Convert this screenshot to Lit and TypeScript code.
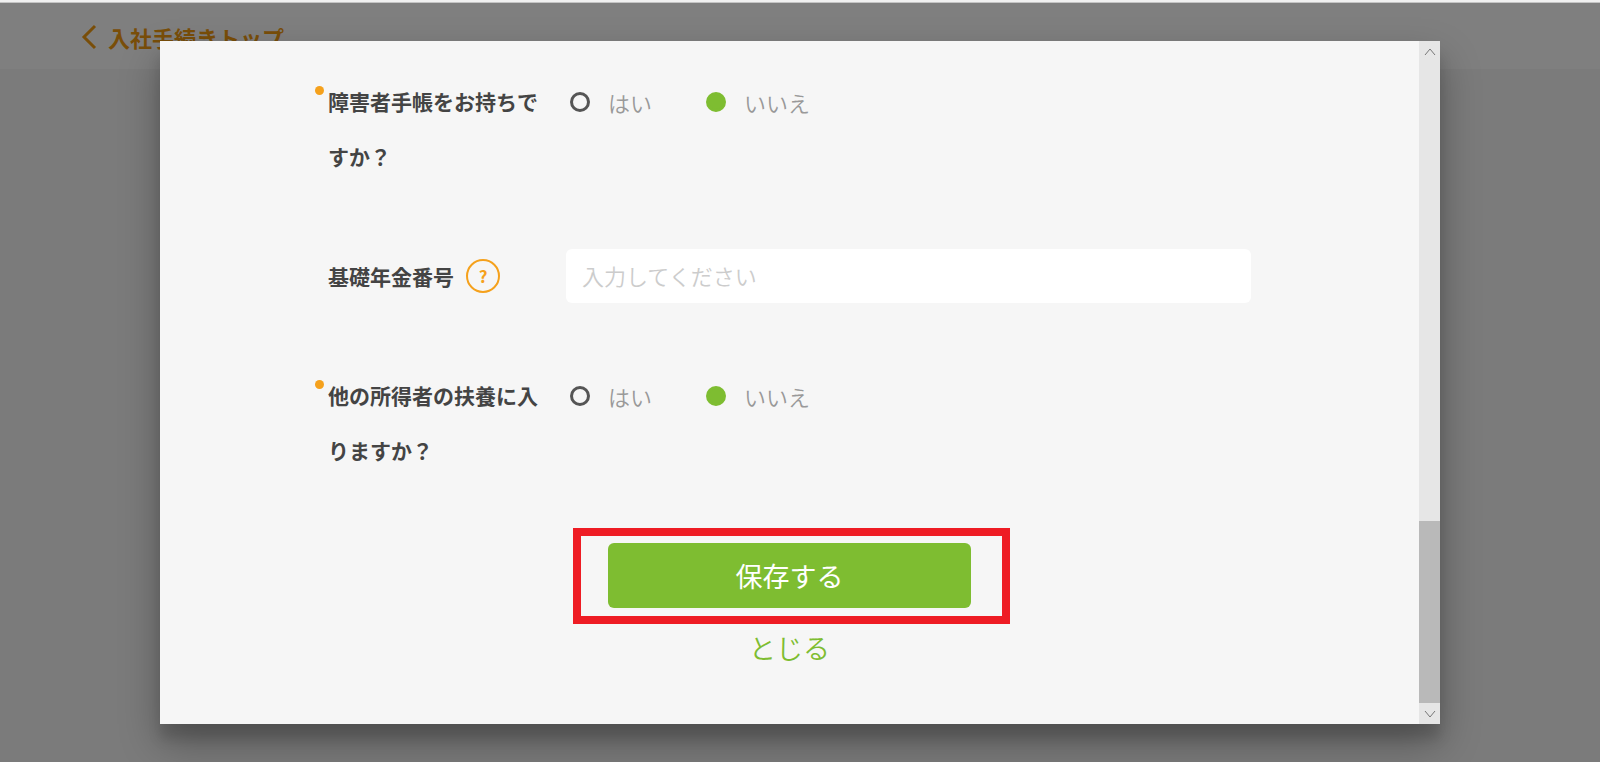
import { LitElement, html, css } from "lit";
import { customElement, property, state } from "lit/decorators.js";

@customElement("yes-no-field")
class YesNoField extends LitElement {
  @property() label = "";
  @property() name = "";
  @state() private value = "no";

  static styles = css`
    :host {
      display: block;
    }
    .row {
      display: grid;
      grid-template-columns: 210px 1fr;
      column-gap: 32px;
      border: 0;
      margin: 0;
      padding: 0;
    }
    .label {
      position: relative;
      font-size: 21px;
      font-weight: 700;
      line-height: 55px;
      color: #444;
    }
    .label::before {
      content: "";
      position: absolute;
      left: -13px;
      top: 12px;
      width: 9px;
      height: 9px;
      border-radius: 50%;
      background: #f5a11c;
    }
    .options {
      display: flex;
      align-items: center;
      gap: 54px;
      height: 55px;
    }
    .option {
      display: flex;
      align-items: center;
      gap: 18px;
      font-size: 22px;
      font-weight: 350;
      line-height: 32px;
      color: #999;
    }
    .radio {
      appearance: none;
      width: 20px;
      height: 20px;
      margin: 0;
      border: 3px solid #555;
      border-radius: 50%;
    }
    .radio:checked {
      border-color: #7ebd31;
      background: #7ebd31;
    }
  `;

  private option(value: string, text: string) {
    return html`<label class="option">
      <input
        class="radio"
        type="radio"
        name=${this.name}
        .checked=${this.value === value}
        @change=${() => (this.value = value)}
      />${text}
    </label>`;
  }

  render() {
    return html`<div class="row" role="radiogroup" aria-labelledby="label">
      <div class="label" id="label">${this.label}</div>
      <div class="options">
        ${this.option("yes", "はい")}${this.option("no", "いいえ")}
      </div>
    </div>`;
  }
}

@customElement("app-root")
class AppRoot extends LitElement {
  static styles = css`
    :host {
      display: block;
      position: relative;
      min-height: 100vh;
      overflow: hidden;
      background: #f6f6f6;
      font-family: "Noto Sans CJK JP", sans-serif;
    }
    .strip {
      height: 3px;
      box-sizing: border-box;
      background: #f0f0f0;
      border-bottom: 1px solid #c4c4c4;
    }
    .header {
      display: flex;
      align-items: center;
      box-sizing: border-box;
      height: 66px;
      padding: 2px 80px 0;
      background: #fff;
    }
    .back {
      display: flex;
      align-items: center;
      gap: 10px;
      color: #f39c12;
      font-size: 22px;
      font-weight: 700;
      line-height: 30px;
      text-decoration: none;
    }
    .overlay {
      position: absolute;
      inset: 3px 0 0;
      padding: 38px 10%;
      background: rgba(0, 0, 0, 0.5);
    }
    .dialog {
      display: flex;
      background: #f6f6f6;
      box-shadow:
        0 19px 38px rgba(0, 0, 0, 0.3),
        0 15px 12px rgba(0, 0, 0, 0.12);
    }
    .form {
      flex: 1;
      padding: 33px 168px 56px;
    }
    .fields {
      display: flex;
      flex-direction: column;
      gap: 65px;
    }
    .row {
      display: grid;
      grid-template-columns: 206px 1fr;
      column-gap: 32px;
    }
    .caption {
      display: flex;
      align-items: center;
      gap: 12px;
      font-size: 21px;
      font-weight: 700;
      color: #444;
    }
    .help {
      width: 34px;
      height: 34px;
      padding: 0;
      border: 2px solid #f5a11c;
      border-radius: 50%;
      background: none;
      color: #f5a11c;
      font: 700 17px/26px "Noto Sans CJK JP", sans-serif;
    }
    .text {
      box-sizing: border-box;
      width: 100%;
      height: 54px;
      padding: 0 16px 2px;
      border: 0;
      border-radius: 6px;
      background: #fff;
      color: #444;
      font: 350 22px/32px "Noto Sans CJK JP", sans-serif;
    }
    .text::placeholder {
      color: #ccc;
      opacity: 1;
    }
    .actions {
      display: flex;
      flex-direction: column;
      align-items: center;
      gap: 20px;
      margin-top: 65px;
    }
    .marked {
      position: relative;
      width: 363px;
    }
    .marked::after {
      content: "";
      position: absolute;
      inset: -15px -39px -16px -35px;
      border: 8px solid #ee1c24;
      pointer-events: none;
    }
    .save,
    .close {
      display: block;
      border: 0;
      padding: 0;
      font: 400 27px/40px "Noto Sans CJK JP", sans-serif;
    }
    .save {
      width: 100%;
      height: 65px;
      border-radius: 6px;
      background: #7ebd31;
      color: #fff;
    }
    .close {
      background: none;
      color: #7ebd31;
      font-weight: 350;
    }
    .scrollbar {
      display: flex;
      flex-direction: column;
      width: 21px;
      background: #e6e6e6;
    }
    .step {
      display: flex;
      align-items: center;
      justify-content: center;
      height: 21px;
      padding: 0;
      border: 0;
      background: none;
    }
    .track {
      display: flex;
      flex: 1;
      flex-direction: column;
      justify-content: flex-end;
    }
    .thumb {
      height: 28.4%;
      background: #b9b9b9;
    }
  `;

  render() {
    return html`
      <div class="strip"></div>
      <header class="header">
        <a class="back" href="#">
          <svg width="18" height="26" viewBox="0 0 18 26" fill="none" stroke="currentColor" stroke-width="3">
            <path d="M15 2 4 13 15 24" />
          </svg>
          入社手続きトップ
        </a>
      </header>
      <div class="overlay">
        <div class="dialog" role="dialog" aria-modal="true">
          <form class="form" @submit=${(e: Event) => e.preventDefault()}>
            <div class="fields">
              <yes-no-field name="disability" label="障害者手帳をお持ちですか？"></yes-no-field>
              <div class="row">
                <div class="caption">
                  <label for="pension">基礎年金番号</label>
                  <button class="help" type="button">?</button>
                </div>
                <input class="text" id="pension" type="text" placeholder="入力してください" />
              </div>
              <yes-no-field name="dependent" label="他の所得者の扶養に入りますか？"></yes-no-field>
            </div>
            <div class="actions">
              <div class="marked"><button class="save" type="submit">保存する</button></div>
              <button class="close" type="button">とじる</button>
            </div>
          </form>
          <div class="scrollbar">
            <button class="step" type="button" aria-label="上へ">
              <svg width="12" height="8" viewBox="0 0 12 8" fill="none" stroke="#777"><path d="M1 7 6 1 11 7" /></svg>
            </button>
            <div class="track"><div class="thumb"></div></div>
            <button class="step" type="button" aria-label="下へ">
              <svg width="12" height="8" viewBox="0 0 12 8" fill="none" stroke="#777"><path d="M1 1 6 7 11 1" /></svg>
            </button>
          </div>
        </div>
      </div>
    `;
  }
}
